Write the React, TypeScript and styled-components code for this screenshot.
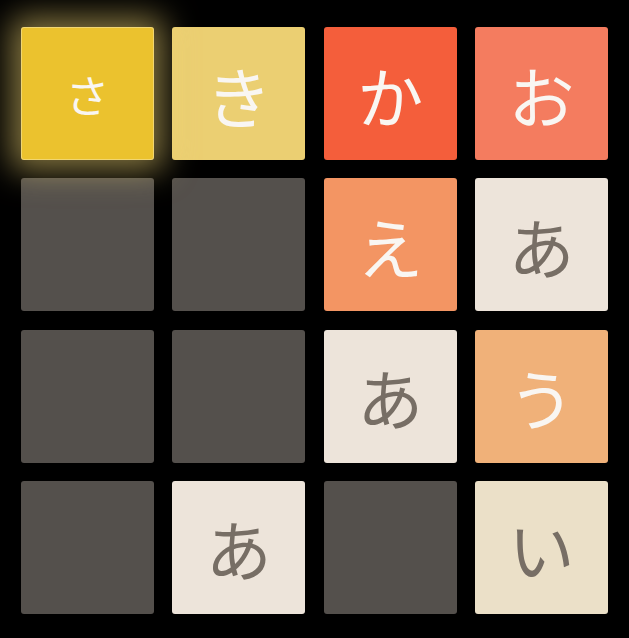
import React from "react";
import styled, { createGlobalStyle, css } from "styled-components";

const Global = createGlobalStyle`
  html, body { margin: 0; padding: 0; background: #000; }
  body { font-family: "Noto Sans CJK JP", "Noto Sans", sans-serif; }
`;

const Board = styled.div`
  display: grid;
  grid-template-columns: repeat(4, 133px);
  grid-auto-rows: 133px;
  column-gap: 18.33px;
  row-gap: 18.33px;
  padding: 27px 0 0 21px;
`;

type Kind = "empty" | "a" | "i" | "u" | "e" | "o" | "ka" | "ki" | "sa";

const palette: Record<Kind, { bg: string; fg: string; size: number }> = {
  empty: { bg: "#54504c", fg: "transparent", size: 62 },
  a: { bg: "#ede4da", fg: "#776e65", size: 66 },
  i: { bg: "#ebe0c8", fg: "#776e65", size: 66 },
  u: { bg: "#f0b179", fg: "#f9f6f2", size: 66 },
  e: { bg: "#f39563", fg: "#f9f6f2", size: 66 },
  o: { bg: "#f47c5f", fg: "#f9f6f2", size: 66 },
  ka: { bg: "#f45e3b", fg: "#f9f6f2", size: 66 },
  ki: { bg: "#ebcf72", fg: "#f9f6f2", size: 66 },
  sa: { bg: "#ebc22e", fg: "#f9f6f2", size: 44 },
};

const Tile = styled.div<{ $kind: Kind }>`
  display: flex;
  align-items: center;
  justify-content: center;
  border-radius: 3px;
  background: ${(p) => palette[p.$kind].bg};
  color: ${(p) => palette[p.$kind].fg};
  font-size: ${(p) => palette[p.$kind].size}px;
  font-weight: 400;
  line-height: 1;
  ${(p) =>
    p.$kind === "sa" &&
    css`
      position: relative;
      z-index: 1;
      box-shadow: 0 0 32px 10px rgba(243, 215, 116, 0.55),
        inset 0 0 0 1px rgba(255, 255, 255, 0.33);
    `}
`;

const cells: { k: Kind; t: string }[] = [
  { k: "sa", t: "さ" },
  { k: "ki", t: "き" },
  { k: "ka", t: "か" },
  { k: "o", t: "お" },
  { k: "empty", t: "" },
  { k: "empty", t: "" },
  { k: "e", t: "え" },
  { k: "a", t: "あ" },
  { k: "empty", t: "" },
  { k: "empty", t: "" },
  { k: "a", t: "あ" },
  { k: "u", t: "う" },
  { k: "empty", t: "" },
  { k: "a", t: "あ" },
  { k: "empty", t: "" },
  { k: "i", t: "い" },
];

export default function App() {
  return (
    <>
      <Global />
      <Board>
        {cells.map((c, i) => (
          <Tile key={i} $kind={c.k}>
            {c.t}
          </Tile>
        ))}
      </Board>
    </>
  );
}
